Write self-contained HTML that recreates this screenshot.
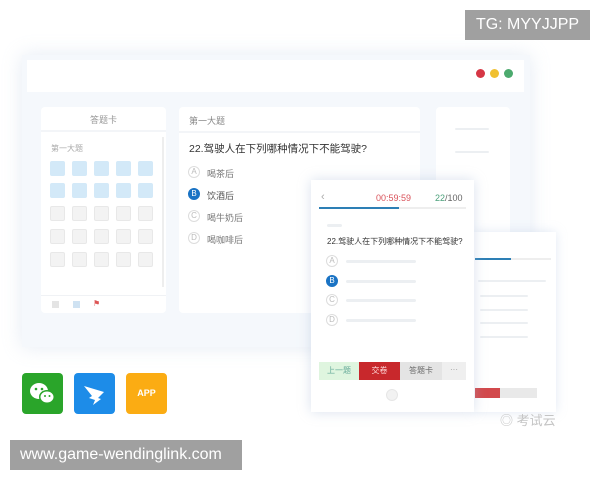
<!DOCTYPE html>
<html><head><meta charset="utf-8"><style>
*{margin:0;padding:0;box-sizing:border-box}
body{width:600px;height:480px;background:#fff;position:relative;overflow:hidden;font-family:"Liberation Sans","Noto Sans CJK SC",sans-serif}
.a{position:absolute}
.cell{position:absolute;width:15px;height:15px;border-radius:2px}
.bl{background:#d3e9f8}
.gr{background:#f3f3f3;border:1px solid #e8e8e8}
.opt{position:absolute;width:12px;height:12px;border-radius:50%;border:1px solid #ddd;font-size:8px;color:#bbb;text-align:center;line-height:10px}
.ot{position:absolute;font-size:9px;color:#777}
.ln{position:absolute;height:4px;background:#eceff2;border-radius:2px}
</style></head><body>
<!-- window -->
<div class="a" style="left:22px;top:55px;width:508px;height:292px;background:#f5f8fc;box-shadow:0 0 18px rgba(170,190,220,.3)"></div>
<div class="a" style="left:27px;top:60px;width:497px;height:32px;background:#fff"></div>
<div class="a" style="left:476px;top:69px;width:9px;height:9px;border-radius:50%;background:#d63745"></div>
<div class="a" style="left:490px;top:69px;width:9px;height:9px;border-radius:50%;background:#f0c030"></div>
<div class="a" style="left:504px;top:69px;width:9px;height:9px;border-radius:50%;background:#4caa6e"></div>
<!-- left card -->
<div class="a" style="left:41px;top:107px;width:125px;height:206px;background:#fff;border-radius:4px"></div>
<div class="a" style="left:41px;top:130px;width:125px;height:2px;background:#f3f5f8"></div>
<div class="a" style="left:41px;top:113px;width:125px;text-align:center;font-size:9px;color:#999">答题卡</div>
<div class="a" style="left:51px;top:143px;font-size:8px;color:#aaa">第一大题</div>
<div class="a" style="left:162px;top:137px;width:2px;height:150px;background:#eee"></div>
<div class="a" style="left:41px;top:295px;width:125px;height:1px;background:#f0f2f5"></div>
<div class="a" style="left:52px;top:301px;width:7px;height:7px;background:#e4e4e4"></div>
<div class="a" style="left:73px;top:301px;width:7px;height:7px;background:#cfe2f2"></div>
<div class="a" style="left:93px;top:299px;font-size:8px;color:#d55">⚑</div>
<!-- grid -->
<div class="cell bl" style="left:50px;top:161px"></div><div class="cell bl" style="left:72px;top:161px"></div><div class="cell bl" style="left:94px;top:161px"></div><div class="cell bl" style="left:116px;top:161px"></div><div class="cell bl" style="left:138px;top:161px"></div>
<div class="cell bl" style="left:50px;top:183px"></div><div class="cell bl" style="left:72px;top:183px"></div><div class="cell bl" style="left:94px;top:183px"></div><div class="cell bl" style="left:116px;top:183px"></div><div class="cell bl" style="left:138px;top:183px"></div>
<div class="cell gr" style="left:50px;top:206px"></div><div class="cell gr" style="left:72px;top:206px"></div><div class="cell gr" style="left:94px;top:206px"></div><div class="cell gr" style="left:116px;top:206px"></div><div class="cell gr" style="left:138px;top:206px"></div>
<div class="cell gr" style="left:50px;top:229px"></div><div class="cell gr" style="left:72px;top:229px"></div><div class="cell gr" style="left:94px;top:229px"></div><div class="cell gr" style="left:116px;top:229px"></div><div class="cell gr" style="left:138px;top:229px"></div>
<div class="cell gr" style="left:50px;top:252px"></div><div class="cell gr" style="left:72px;top:252px"></div><div class="cell gr" style="left:94px;top:252px"></div><div class="cell gr" style="left:116px;top:252px"></div><div class="cell gr" style="left:138px;top:252px"></div>
<!-- middle card -->
<div class="a" style="left:179px;top:107px;width:241px;height:206px;background:#fff;border-radius:4px"></div>
<div class="a" style="left:179px;top:131px;width:241px;height:2px;background:#f3f5f8"></div>
<div class="a" style="left:189px;top:114px;font-size:9px;color:#888">第一大题</div>
<div class="a" style="left:189px;top:141px;font-size:10.5px;color:#333">22.驾驶人在下列哪种情况下不能驾驶?</div>
<div class="opt" style="left:188px;top:166px">A</div><div class="ot" style="left:207px;top:167px">喝茶后</div>
<div class="opt" style="left:188px;top:188px;background:#1a73c4;border-color:#1a73c4;color:#fff">B</div><div class="ot" style="left:207px;top:189px;color:#555">饮酒后</div>
<div class="opt" style="left:188px;top:210px">C</div><div class="ot" style="left:207px;top:211px">喝牛奶后</div>
<div class="opt" style="left:188px;top:232px">D</div><div class="ot" style="left:207px;top:233px">喝咖啡后</div>
<!-- right card -->
<div class="a" style="left:436px;top:107px;width:74px;height:206px;background:#fff;border-radius:4px"></div>
<div class="ln" style="left:455px;top:128px;width:34px;height:2px"></div>
<div class="ln" style="left:455px;top:151px;width:34px;height:2px"></div>
<!-- back phone -->
<div class="a" style="left:473px;top:232px;width:83px;height:180px;background:#fff;box-shadow:0 0 10px rgba(170,190,220,.35)"></div>
<div class="a" style="left:475px;top:258px;width:36px;height:2px;background:#2d7fb5"></div>
<div class="a" style="left:511px;top:258px;width:40px;height:2px;background:#eee"></div>
<div class="ln" style="left:478px;top:280px;width:68px;height:2px"></div>
<div class="ln" style="left:480px;top:295px;width:48px;height:2px"></div>
<div class="ln" style="left:480px;top:309px;width:48px;height:2px"></div>
<div class="ln" style="left:480px;top:322px;width:48px;height:2px"></div>
<div class="ln" style="left:480px;top:336px;width:48px;height:2px"></div>
<div class="a" style="left:475px;top:388px;width:25px;height:10px;background:#d2494c"></div>
<div class="a" style="left:500px;top:388px;width:37px;height:10px;background:#e9e9e9"></div>
<div class="a" style="left:500px;top:410px;font-size:13px;color:#c4c4c4">◎ 考试云</div>
<!-- front phone -->
<div class="a" style="left:311px;top:180px;width:163px;height:232px;background:#fff;box-shadow:0 0 12px rgba(160,180,210,.4)"></div>
<div class="a" style="left:321px;top:191px;font-size:11px;color:#aaa">‹</div>
<div class="a" style="left:376px;top:193px;font-size:9px;color:#d9525a">00:59:59</div>
<div class="a" style="left:435px;top:193px;font-size:9px;color:#666"><span style="color:#4aa07a">22</span>/100</div>
<div class="a" style="left:319px;top:207px;width:80px;height:2px;background:#2d7fb5"></div>
<div class="a" style="left:399px;top:207px;width:67px;height:2px;background:#eee"></div>
<div class="ln" style="left:327px;top:224px;width:15px;height:3px"></div>
<div class="a" style="left:327px;top:236px;font-size:8px;color:#333;white-space:nowrap">22.驾驶人在下列哪种情况下不能驾驶?</div>
<div class="opt" style="left:326px;top:255px">A</div><div class="ln" style="left:346px;top:260px;width:70px;height:3px"></div>
<div class="opt" style="left:326px;top:275px;background:#1a73c4;border-color:#1a73c4;color:#fff">B</div><div class="ln" style="left:346px;top:280px;width:70px;height:3px"></div>
<div class="opt" style="left:326px;top:294px">C</div><div class="ln" style="left:346px;top:299px;width:70px;height:3px"></div>
<div class="opt" style="left:326px;top:314px">D</div><div class="ln" style="left:346px;top:319px;width:70px;height:3px"></div>
<div class="a" style="left:319px;top:362px;width:40px;height:18px;background:#dff5df;color:#6a9;font-size:8px;text-align:center;line-height:18px">上一题</div>
<div class="a" style="left:359px;top:362px;width:41px;height:18px;background:#c8282c;color:#fdd;font-size:8px;text-align:center;line-height:18px">交卷</div>
<div class="a" style="left:400px;top:362px;width:42px;height:18px;background:#e4e4e4;color:#666;font-size:8px;text-align:center;line-height:18px">答题卡</div>
<div class="a" style="left:442px;top:362px;width:24px;height:18px;background:#efefef;color:#999;font-size:8px;text-align:center;line-height:16px">···</div>
<div class="a" style="left:386px;top:389px;width:12px;height:12px;border-radius:50%;background:#f2f2f2;border:1px solid #e6e6e6"></div>
<!-- app icons -->
<div class="a" style="left:22px;top:373px;width:41px;height:41px;border-radius:4px;background:#2aa52a">
<svg width="41" height="41"><ellipse cx="17" cy="18" rx="9" ry="8" fill="#fff"/><ellipse cx="25" cy="24" rx="8" ry="7" fill="#2aa52a"/><ellipse cx="25" cy="24" rx="6.5" ry="5.5" fill="#fff"/><circle cx="14" cy="16" r="1.3" fill="#2aa52a"/><circle cx="20" cy="16" r="1.3" fill="#2aa52a"/><circle cx="23" cy="23" r="1" fill="#2aa52a"/><circle cx="27.5" cy="23" r="1" fill="#2aa52a"/></svg></div>
<div class="a" style="left:74px;top:373px;width:41px;height:41px;border-radius:4px;background:#1d8ce8">
<svg width="41" height="41"><path d="M10 13 L30 19 L24 25 L27 26 L19 32 L21 27 L15 25 L18 23 Z" fill="#fff"/></svg></div>
<div class="a" style="left:126px;top:373px;width:41px;height:41px;border-radius:4px;background:#fbac13;color:#fff;font-size:9px;font-weight:bold;text-align:center;line-height:41px">APP</div>
<!-- overlays -->
<div class="a" style="left:10px;top:440px;width:232px;height:30px;background:#a0a0a0;color:#fff;font-size:16px;line-height:30px;padding-left:10px">www.game-wendinglink.com</div>
<div class="a" style="left:465px;top:10px;width:125px;height:30px;background:#a0a0a0;color:#fff;font-size:16px;line-height:30px;text-align:center">TG: MYYJJPP</div>
</body></html>
